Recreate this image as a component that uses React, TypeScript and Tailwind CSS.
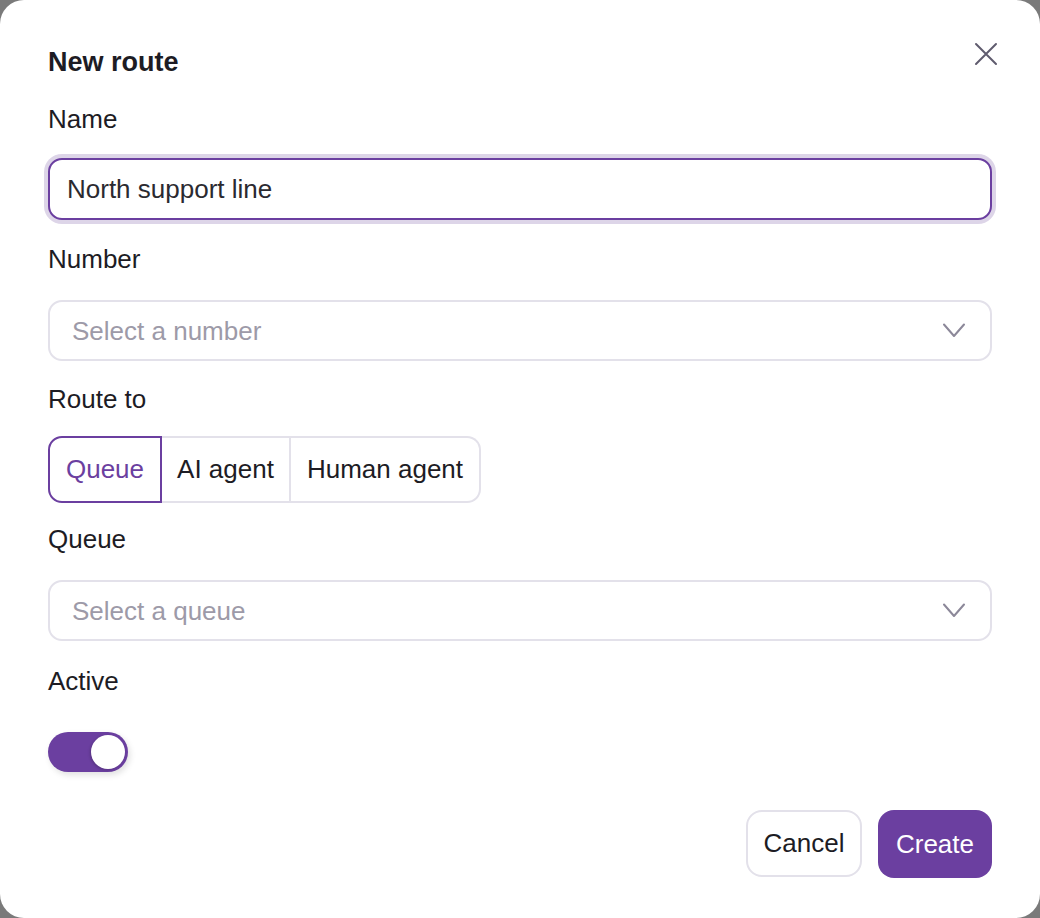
import React from "react";

function Chevron() {
  return (
    <svg width="22" height="15" viewBox="0 0 22 15" fill="none" className="shrink-0">
      <path d="M1 1.5 L11 13 L21 1.5" stroke="#8c8899" strokeWidth="2" strokeLinecap="round" strokeLinejoin="round" />
    </svg>
  );
}

function SelectBox({ placeholder }: { placeholder: string }) {
  return (
    <div className="flex h-[61px] w-full items-center justify-between rounded-[14px] border-2 border-[#e3e1ea] bg-white pl-[22px] pr-[25px]">
      <span className="text-[26px] leading-8 text-[#9d9aa8]">{placeholder}</span>
      <Chevron />
    </div>
  );
}

export default function App() {
  return (
    <div className="min-h-screen bg-[#7a7a7a]" style={{ fontFamily: '"Liberation Sans", Arial, sans-serif' }}>
      <div className="relative flex h-[918px] w-[1040px] flex-col rounded-[24px] bg-white px-12 pt-[46px] text-[#1d1c24]">
        <h1 className="text-[27px] font-bold leading-8">New route</h1>
        <button className="absolute right-[42px] top-[42px] flex h-6 w-6 items-center justify-center" aria-label="Close">
          <svg width="24" height="24" viewBox="0 0 24 24" fill="none">
            <path d="M2 2 L22 22 M22 2 L2 22" stroke="#5f5b6e" strokeWidth="2" strokeLinecap="round" />
          </svg>
        </button>

        <label className="mt-[25px] text-[26px] leading-8">Name</label>
        <div className="mt-[23px] flex h-[62px] w-full items-center rounded-[14px] border-2 border-[#6b3fa0] bg-white pl-[17px] shadow-[0_0_0_4px_#ddd5e8]">
          <span className="text-[26px] leading-8 text-[#2b2a30]">North support line</span>
        </div>

        <label className="mt-[23px] text-[26px] leading-8">Number</label>
        <div className="mt-[25px]">
          <SelectBox placeholder="Select a number" />
        </div>

        <label className="mt-[22px] text-[26px] leading-8">Route to</label>
        <div className="mt-[21px] flex h-[67px]">
          <button className="flex w-[114px] items-center justify-center rounded-l-[14px] border-2 border-[#6b3fa0] text-[26px] text-[#6b3fa0]">
            Queue
          </button>
          <button className="flex w-[129px] items-center justify-center border-y-2 border-r-2 border-[#e3e1ea] text-[26px]">
            AI agent
          </button>
          <button className="flex w-[190px] items-center justify-center rounded-r-[14px] border-y-2 border-r-2 border-[#e3e1ea] text-[26px]">
            Human agent
          </button>
        </div>

        <label className="mt-[20px] text-[26px] leading-8">Queue</label>
        <div className="mt-[25px]">
          <SelectBox placeholder="Select a queue" />
        </div>

        <label className="mt-[24px] text-[26px] leading-8">Active</label>
        <div className="mt-[35px]">
          <div className="flex h-10 w-20 items-center justify-end rounded-full bg-[#6b3fa0] pr-[3px] shadow-[2px_3px_6px_rgba(0,0,0,0.12)]">
            <div className="h-[34px] w-[34px] rounded-full bg-white shadow-[-1px_1px_3px_rgba(0,0,0,0.2)]" />
          </div>
        </div>

        <div className="mt-[38px] flex justify-end gap-4">
          <button className="flex h-[67px] w-[116px] items-center justify-center rounded-[16px] border-2 border-[#e3e1ea] bg-white text-[26px] text-[#1d1c24]">
            Cancel
          </button>
          <button className="flex h-[68px] w-[114px] items-center justify-center rounded-[16px] bg-[#6b3fa0] text-[26px] text-white">
            Create
          </button>
        </div>
      </div>
    </div>
  );
}
